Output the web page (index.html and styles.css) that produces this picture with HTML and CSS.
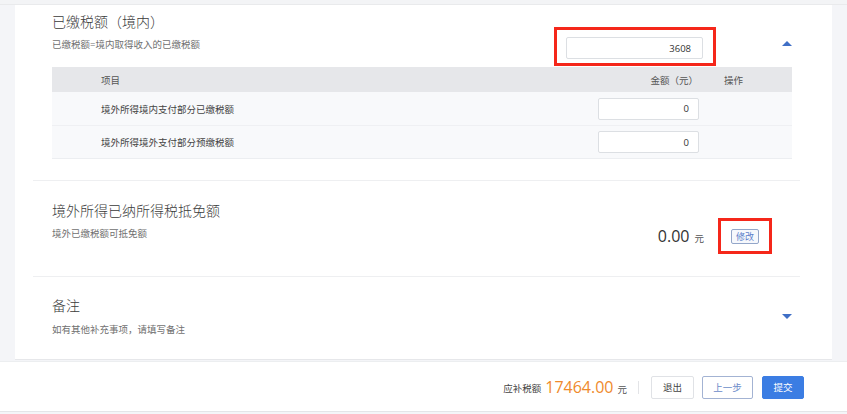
FILE: index.html
```html
<!DOCTYPE html>
<html lang="zh-CN">
<head>
<meta charset="utf-8">
<title>已缴税额</title>
<link rel="stylesheet" href="styles.css">
</head>
<body>
<div class="page">
  <div class="topstrip"></div>
  <div class="main">
    <div class="card">
      <section class="sec sec-first">
        <div class="sec-head">
          <div class="sec-titles">
            <h2 class="sec-title">已缴税额（境内）</h2>
            <p class="sec-sub">已缴税额=境内取得收入的已缴税额</p>
          </div>
          <div class="total-input-wrap">
            <input class="num-input total-input" type="text" value="3608">
            <span class="mark mark-total"></span>
          </div>
          <div class="toggle"><span class="tri tri-up"></span></div>
        </div>
        <div class="table">
          <div class="tr th">
            <div class="td td-name">项目</div>
            <div class="td td-amt">金额（元）</div>
            <div class="td td-op">操作</div>
          </div>
          <div class="tr">
            <div class="td td-name">境外所得境内支付部分已缴税额</div>
            <div class="td td-amt"><input class="num-input row-input" type="text" value="0"></div>
            <div class="td td-op"></div>
          </div>
          <div class="tr tr-last">
            <div class="td td-name">境外所得境外支付部分预缴税额</div>
            <div class="td td-amt"><input class="num-input row-input" type="text" value="0"></div>
            <div class="td td-op"></div>
          </div>
        </div>
      </section>

      <section class="sec sec-second">
        <div class="sec-head">
          <div class="sec-titles">
            <h2 class="sec-title">境外所得已纳所得税抵免额</h2>
            <p class="sec-sub">境外已缴税额可抵免额</p>
          </div>
          <div class="credit">
            <span class="credit-num">0.00</span>
            <span class="credit-unit">元</span>
            <span class="edit-wrap">
              <button class="edit-btn" type="button">修改</button>
              <span class="mark mark-edit"></span>
            </span>
          </div>
        </div>
      </section>

      <section class="sec sec-third">
        <div class="sec-head">
          <div class="sec-titles">
            <h2 class="sec-title">备注</h2>
            <p class="sec-sub">如有其他补充事项，请填写备注</p>
          </div>
          <div class="toggle toggle-down"><span class="tri tri-down"></span></div>
        </div>
      </section>
    </div>
  </div>
  <footer class="footer">
    <span class="due-label">应补税额</span>
    <span class="due-num">17464.00</span>
    <span class="due-unit">元</span>
    <span class="divider"></span>
    <button class="btn btn-plain" type="button">退出</button>
    <button class="btn btn-outline" type="button">上一步</button>
    <button class="btn btn-primary" type="button">提交</button>
  </footer>
</div>
</body>
</html>
```

FILE: styles.css
```css
* { box-sizing: border-box; }

html, body {
  margin: 0;
  padding: 0;
  height: 414px;
  overflow: hidden;
  background: #f4f5f8;
  font-family: "Open Sans", "Noto Sans CJK SC", sans-serif;
  color: #333;
}

.page {
  display: flex;
  flex-direction: column;
  height: 414px;
}

.topstrip {
  height: 5px;
  background: #f3f4f6;
  border-bottom: 1px solid #e9eaec;
}

.main {
  display: flex;
  padding-left: 15px;
  padding-right: 15px;
}

.card {
  width: 817px;
  background: #fff;
  border-bottom: 1px solid #e6e7ea;
}

.sec {
  margin-left: 18px;
  margin-right: 32px;
  padding-left: 19px;
  padding-right: 8px;
}

.sec + .sec {
  border-top: 1px solid #eeeff1;
}

.sec-first { padding-top: 7px; padding-bottom: 21px; }
.sec-second { padding-top: 20px; padding-bottom: 30px; }
.sec-third { padding-top: 19px; padding-bottom: 22px; }

.sec-head {
  display: flex;
  align-items: flex-start;
}

.sec-titles { flex: 1; }

.sec-title {
  margin: 0;
  font-size: 14px;
  line-height: 20px;
  font-weight: 300;
  color: #3a3a3a;
}

.sec-sub {
  margin: 6px 0 0;
  font-size: 9.5px;
  line-height: 14px;
  color: #707070;
}

.sec-third .sec-sub { margin-top: 7px; }

.total-input-wrap {
  position: relative;
  margin-top: 25px;
}

.num-input {
  display: block;
  border: 1px solid #dcdfe3;
  border-radius: 2px;
  background: #fff;
  text-align: right;
  font-family: "Open Sans", sans-serif;
  font-size: 9.5px;
  color: #333;
  outline: none;
}

.total-input {
  width: 137px;
  height: 22px;
  padding: 0 11px 0 4px;
}

.mark {
  position: absolute;
  border: 3px solid #f5271a;
  pointer-events: none;
}

.mark-total {
  left: -12px;
  top: -10px;
  width: 162px;
  height: 39px;
}

.toggle {
  width: 89px;
  display: flex;
  justify-content: flex-end;
  padding-top: 29px;
}

.toggle-down {
  padding-top: 18px;
}

.tri {
  display: block;
  width: 0;
  height: 0;
  border-left: 5px solid transparent;
  border-right: 5px solid transparent;
}

.tri-up { border-bottom: 5px solid #3f6fc6; }
.tri-down { border-top: 5px solid #3f6fc6; }

.table {
  margin-top: 8px;
  font-size: 9.5px;
  color: #444;
}

.tr {
  display: grid;
  grid-template-columns: 1fr 106px 88px;
  align-items: center;
  height: 34px;
  background: #f8f9fb;
  border-bottom: 1px solid #eff0f3;
}

.tr-last { height: 33px; border-bottom: 1px solid #eceef1; }

.th {
  height: 25px;
  background: #e6e7ea;
  border-bottom: none;
  color: #555;
}

.td-name { padding-left: 49px; }

.td-amt {
  display: flex;
  justify-content: flex-end;
  padding-right: 5px;
}

.th .td-amt { padding-right: 6px; }

.td-op { padding-left: 20px; }

.row-input {
  width: 101px;
  height: 22px;
  padding: 0 9px 0 4px;
}

.credit {
  display: flex;
  align-items: center;
  margin-top: 25px;
  padding-right: 33px;
}

.credit-num {
  font-size: 16px;
  line-height: 20px;
  color: #333;
}

.credit-unit {
  font-size: 9.5px;
  color: #555;
  margin-left: 5px;
  margin-top: 3px;
}

.edit-wrap {
  position: relative;
  margin-left: 27px;
}

.edit-btn {
  display: block;
  width: 28px;
  height: 15px;
  padding: 0;
  border: 1px solid #93a6c9;
  border-radius: 2px;
  background: #f6f8fc;
  color: #5b7fcb;
  font-family: "Noto Sans CJK SC", sans-serif;
  font-size: 9px;
  line-height: 13px;
}

.mark-edit {
  left: -13px;
  top: -11px;
  width: 54px;
  height: 36px;
}

.footer {
  margin-top: 1px;
  height: 51px;
  background: #fff;
  border-top: 1px solid #eceef0;
  border-bottom: 1px solid #e4e5e8;
  display: flex;
  align-items: center;
  justify-content: flex-end;
  padding-right: 43px;
  padding-top: 1px;
}

.due-label {
  font-size: 9.5px;
  color: #444;
  margin-top: 2px;
}

.due-num {
  font-size: 16px;
  color: #ef8a2c;
  margin-left: 4px;
}

.due-unit {
  font-size: 9.5px;
  color: #555;
  margin-left: 4px;
  margin-top: 3px;
}

.divider {
  width: 1px;
  height: 13px;
  background: #e3e4e7;
  margin-left: 11px;
  margin-right: 12px;
}

.btn {
  height: 23px;
  padding: 0;
  border-radius: 2px;
  font-family: "Noto Sans CJK SC", sans-serif;
  font-size: 9.5px;
  cursor: pointer;
}

.btn-plain {
  width: 43px;
  border: 1px solid #e0e2e6;
  background: #fff;
  color: #444;
}

.btn-outline {
  width: 51px;
  margin-left: 8px;
  border: 1px solid #a3b3d3;
  background: #fff;
  color: #6b8bc9;
}

.btn-primary {
  width: 42px;
  margin-left: 9px;
  border: 1px solid #3b7de3;
  background: #3b7de3;
  color: #fff;
}
```
